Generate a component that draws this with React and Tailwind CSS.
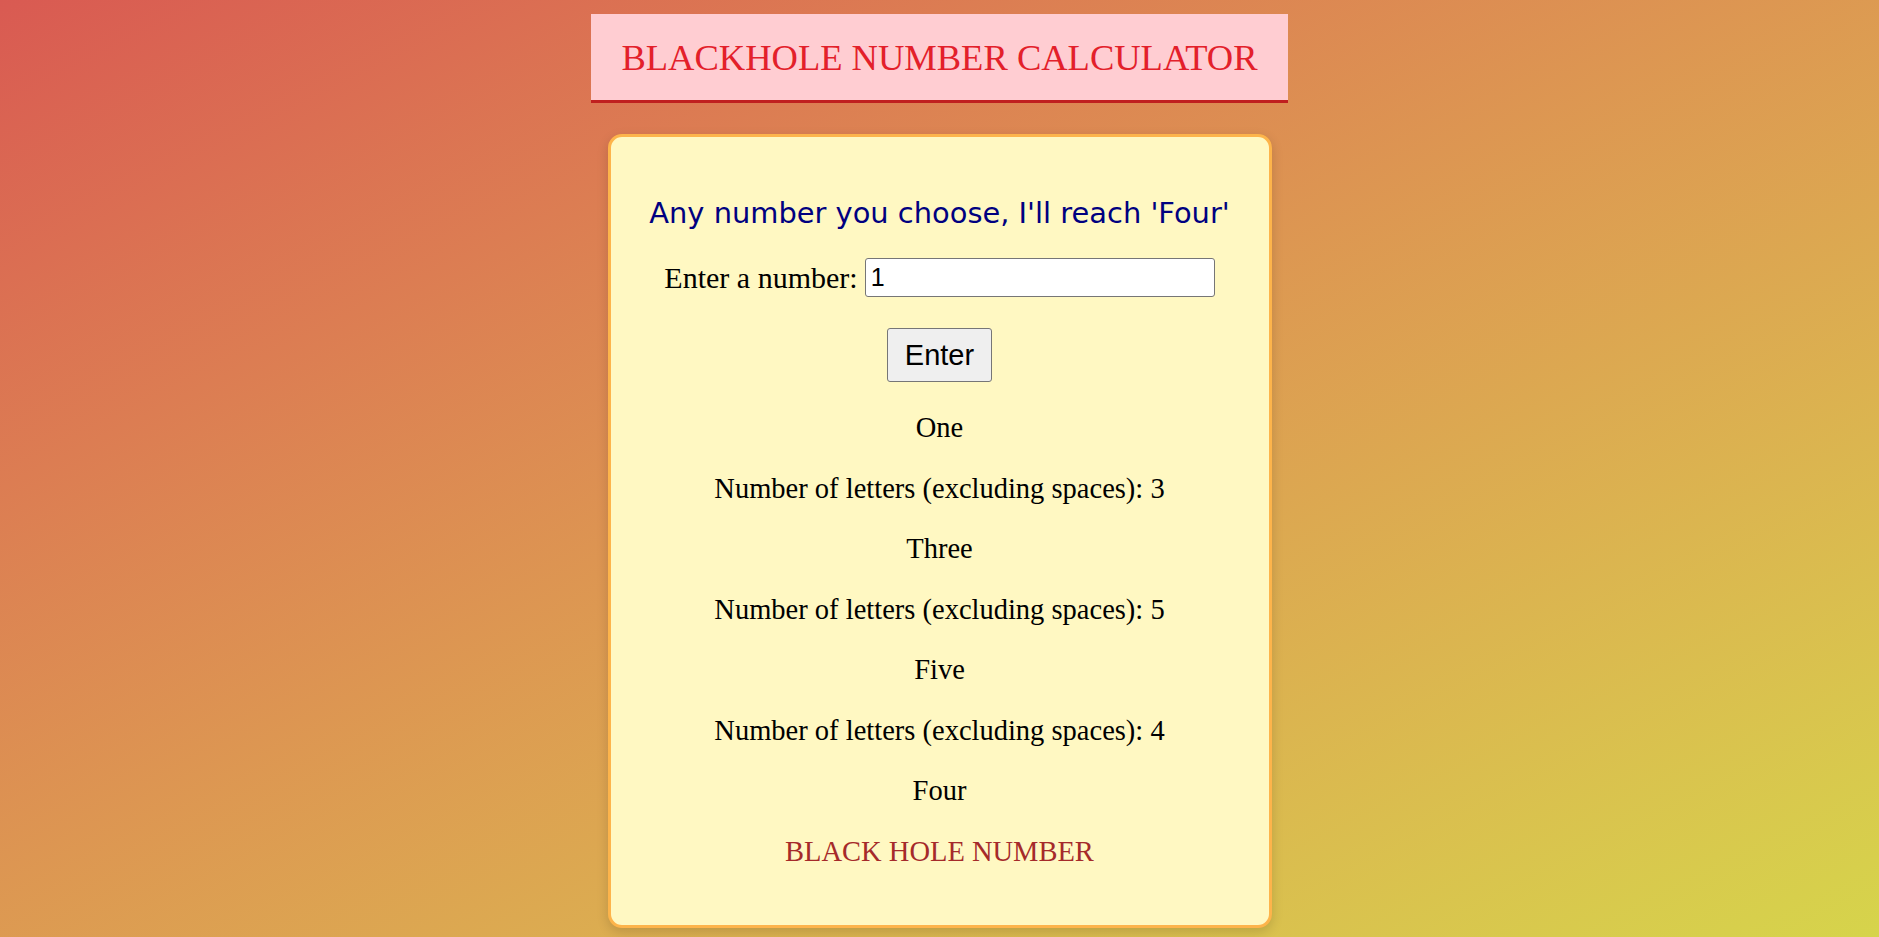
import React, { useState } from 'react'

const words = ['Zero','One','Two','Three','Four','Five','Six','Seven','Eight','Nine','Ten','Eleven','Twelve','Thirteen','Fourteen','Fifteen','Sixteen','Seventeen','Eighteen','Nineteen','Twenty']

function toWords(n){
  if(n < words.length) return words[n]
  return String(n)
}

function chain(start){
  const out = []
  let n = start
  let guard = 0
  while(guard < 20){
    const w = toWords(n)
    out.push({ word: w })
    if(n === 4) break
    const len = w.replace(/\s/g,'').length
    out[out.length-1].len = len
    n = len
    guard++
  }
  return out
}

export default function App(){
  const [value, setValue] = useState('1')
  const [steps, setSteps] = useState(chain(1))

  function handleEnter(){
    const n = parseInt(value, 10)
    if(!isNaN(n) && n >= 0) setSteps(chain(n))
  }

  return (
    <div className="min-h-screen bg-linear-to-br from-[#d95a52] to-[#d6d44b] flex flex-col items-center pt-[14px] font-['Liberation_Serif',serif]">
      <div className="w-[697px] bg-[#ffcdd2] border-b-[3px] border-[#c0201f] h-[89px] flex items-center justify-center">
        <h1 className="text-[36.5px] leading-none text-[#e3202a] pt-[2px]">BLACKHOLE NUMBER CALCULATOR</h1>
      </div>

      <div className="mt-[31px] w-[664px] bg-[#fff8c2] border-[3px] border-[#fdb44b] rounded-[14px] shadow-[0_4px_12px_rgba(0,0,0,0.15)] flex flex-col items-center pt-[59px] pb-[57px] text-[28.5px] text-black">
        <h2 className="font-['DejaVu_Sans',Verdana,sans-serif] text-[28.9px] leading-[34px] text-[#000080]">Any number you choose, I'll reach 'Four'</h2>

        <div className="mt-[28px] flex items-center h-[39px]">
          <label className="leading-[32px] text-[30px]">Enter a number:</label>
          <input
            className="ml-[7px] w-[350px] h-[39px] bg-white border border-[#767676] rounded-[3px] px-[5px] text-[25px] font-['Liberation_Sans',Arial,sans-serif] outline-none"
            value={value}
            onChange={e=>setValue(e.target.value)}
          />
        </div>

        <button onClick={handleEnter} className="mt-[31px] h-[54px] px-[17px] bg-[#efefef] border border-[#767676] rounded-[3px] text-[29px] font-['Liberation_Sans',Arial,sans-serif] leading-none">Enter</button>

        <div className="mt-[30px] flex flex-col items-center gap-[28.5px]">
          {steps.map((s, i) => (
            <React.Fragment key={i}>
              <p className="leading-[32px]">{s.word}</p>
              {s.len !== undefined && <p className="leading-[32px]">Number of letters (excluding spaces): {s.len}</p>}
            </React.Fragment>
          ))}
          <p className="leading-[32px] text-[#a52a2a]">BLACK HOLE NUMBER</p>
        </div>
      </div>
    </div>
  )
}
